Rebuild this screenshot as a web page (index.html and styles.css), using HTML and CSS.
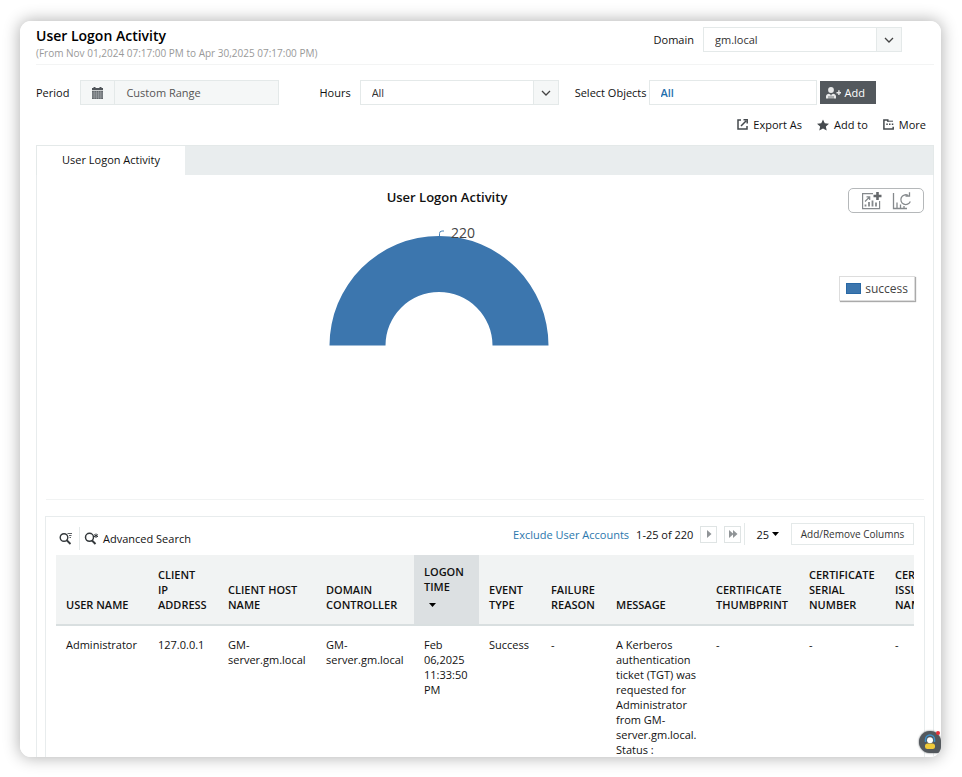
FILE: index.html
```html
<!DOCTYPE html>
<html lang="en">
<head>
<meta charset="utf-8">
<title>User Logon Activity</title>
<link rel="stylesheet" href="styles.css">
</head>
<body>
<main class="card">
  <header class="head">
    <div class="head-titles">
      <h1 class="title">User Logon Activity</h1>
      <p class="subtitle">(From Nov 01,2024 07:17:00 PM to Apr 30,2025 07:17:00 PM)</p>
    </div>
    <div class="field head-domain">
      <label for="domain">Domain</label>
      <div class="select">
        <select id="domain"><option>gm.local</option></select>
        <svg class="chev" viewBox="0 0 10 6"><path d="M1 1l4 4 4-4"/></svg>
      </div>
    </div>
  </header>

  <form class="filters">
    <div class="field period">
      <label for="period">Period</label>
      <div class="date">
        <button type="button" class="date-btn" aria-label="Open calendar">
          <svg width="11" height="12" viewBox="0 0 11 12"><path fill="#50555a" d="M0 1h1.500V0h2v1h4V0h2v1H11v2.300H0z"/><path fill="#62676b" d="M0 4h11v8H0z"/><path stroke="#a9adb0" stroke-width=".6" d="M0 6h11M0 8h11M0 10h11M2.200 4v8M4.400 4v8M6.600 4v8M8.800 4v8"/></svg>
        </button>
        <input id="period" type="text" value="Custom Range" readonly>
      </div>
    </div>
    <div class="field hours">
      <label for="hours">Hours</label>
      <div class="select">
        <select id="hours"><option>All</option></select>
        <svg class="chev" viewBox="0 0 10 6"><path d="M1 1l4 4 4-4"/></svg>
      </div>
    </div>
    <div class="field objects">
      <label for="objects">Select Objects</label>
      <input id="objects" class="objects-input" type="text" value="All" readonly>
      <button type="button" class="add">
        <svg width="15" height="12" viewBox="0 0 15 12" fill="#e8e9ea"><circle cx="5" cy="3" r="2.900"/><path d="M0 11.500V9.500C0 7.500 1.500 7 3 6.700l2 1.300 2-1.300c1.500.3 3 .8 3 2.800v2z"/><path d="M10.500 5h1.700V3.300h1.400V5H15v1.400h-1.400v1.700h-1.400V6.400h-1.700z"/><path stroke="#53585d" stroke-width=".8" d="M3 9v3M7 9v3M5 8.500V12"/></svg>
        Add
      </button>
    </div>
  </form>

  <nav class="actions">
    <a href="#export"><svg width="11" height="11" viewBox="0 0 11 11" fill="none" stroke="#44494d" stroke-width="1.500"><path d="M4 1H1v9h9V7"/><path d="M4 7L9 2M6.500.8h3.700v3.700"/></svg>Export As</a>
    <a href="#add"><svg width="12" height="12" viewBox="0 0 13 12" fill="#44494d"><path d="M6.500 0l1.900 4 4.600.6-3.400 3 .9 4.400-4-2.200-4 2.200.9-4.400L0 4.600 4.600 4z"/></svg>Add to</a>
    <a href="#more"><svg width="11" height="11" viewBox="0 0 11 11"><path fill="none" stroke="#44494d" stroke-width="1.500" d="M4.800 2.700V1H.9v9h9.300V7.800"/><path fill="none" stroke="#44494d" stroke-width="1" d="M4.800 2.200H10"/><path fill="#44494d" d="M3.300 4.500h1.500V6H3.300zM6 4.500h1.500V6H6zM8.800 4.500h1.500V6H8.800z"/></svg>More</a>
  </nav>

  <div class="tabs"><button type="button" class="tab">User Logon Activity</button></div>

  <section class="panel">
    <div class="chart">
      <figure class="plot">
        <figcaption>User Logon Activity</figcaption>
        <svg width="220" height="122" viewBox="0 0 220 122">
          <path d="M.5 121.500A109.500 109.500 0 0 1 219.500 121.500H163.500A53.500 53.500 0 0 0 56.500 121.500z" fill="#3c76ae"/>
          <path d="M110.500 12V9.500Q110.500 7 113 7h2" fill="none" stroke="#4c84b8" stroke-width="1"/>
          <text x="122" y="14" class="value">220</text>
        </svg>
      </figure>
      <div class="side">
        <div class="tools">
          <button type="button" aria-label="Add chart">
            <svg width="21" height="18" viewBox="0 0 21 18" fill="none" stroke="#85898c" stroke-width="1.200"><path d="M12 1.600H1.600v15h17V9"/><path d="M4 9.500L8.500 5M5.500 4.800h3.200V8"/><path stroke-width="1.800" d="M4.500 12.500v2M8 10v4.500M11.500 8.500v6M15 10.500v4"/><path stroke="#66696c" stroke-width="2.600" d="M16.500 0v8M12.500 4h8"/></svg>
          </button>
          <button type="button" aria-label="Refresh chart">
            <svg width="20" height="18" viewBox="0 0 20 18" fill="none" stroke="#85898c" stroke-width="1.300"><path d="M1.500 1v15.500H15M5 10.500V16M8.500 12.500V16M12 14v2"/><path d="M16 3.300A4.900 4.900 0 1 0 18.300 9.500"/><path d="M13.500 4h4V.3"/></svg>
          </button>
        </div>
        <div class="legend"><span class="swatch"></span>success</div>
      </div>
    </div>

    <div class="report">
      <div class="bar">
        <button type="button" class="search" aria-label="Search">
          <svg width="13" height="13" viewBox="0 0 13 13" fill="none" stroke="#34393c"><circle cx="5" cy="5.500" r="3.800" stroke-width="1.400"/><path stroke-width="1.800" d="M7.500 8l4 4"/><path stroke-width=".8" d="M8.500 1.500H13M10 3.500h2.500M10.500 5.500H12"/></svg>
        </button>
        <a class="advanced" href="#advanced"><svg width="15" height="13" viewBox="0 0 15 13" fill="none" stroke="#34393c"><circle cx="5.500" cy="5.300" r="4" stroke-width="1.500"/><path stroke-width="2" d="M8 8.500l3.500 3.500"/><path stroke-width="1" d="M12 1.500v4.500M10 2.600l4 2.200M14 2.600l-4 2.200"/></svg>Advanced Search</a>
        <div class="pager">
          <a class="exclude" href="#exclude">Exclude User Accounts</a>
          <span class="range">1-25 of 220</span>
          <button type="button" class="page" aria-label="Next page"><svg width="6" height="8" viewBox="0 0 6 8"><path fill="#909497" d="M1 0l4.500 4L1 8z"/></svg></button>
          <button type="button" class="page" aria-label="Last page"><svg width="10" height="8" viewBox="0 0 10 8"><path fill="#909497" d="M1 0l4.500 4L1 8zM5 0l4.500 4L5 8z"/></svg></button>
          <button type="button" class="size">25<svg width="7" height="4" viewBox="0 0 7 4"><path d="M0 0h7L3.500 4z"/></svg></button>
          <button type="button" class="columns">Add/Remove Columns</button>
        </div>
      </div>
      <div class="scroll">
        <table>
          <colgroup><col class="c-user"><col class="c-ip"><col class="c-host"><col class="c-host"><col class="c-time"><col class="c-type"><col class="c-time"><col class="c-msg"><col class="c-thumb"><col class="c-serial"><col class="c-serial"></colgroup>
          <thead>
            <tr><th>USER NAME</th><th>CLIENT IP ADDRESS</th><th>CLIENT HOST NAME</th><th>DOMAIN CONTROLLER</th><th class="sorted">LOGON TIME<svg width="7" height="4" viewBox="0 0 7 4"><path d="M0 0h7L3.500 4z"/></svg></th><th>EVENT TYPE</th><th>FAILURE REASON</th><th>MESSAGE</th><th>CERTIFICATE THUMBPRINT</th><th>CERTIFICATE SERIAL NUMBER</th><th>CERTIFICATE ISSUER NAME</th></tr>
          </thead>
          <tbody>
            <tr><td>Administrator</td><td>127.0.0.1</td><td>GM-server.gm.local</td><td>GM-server.gm.local</td><td>Feb 06,2025 11:33:50 PM</td><td>Success</td><td>-</td><td>A Kerberos authentication ticket (TGT) was requested for Administrator from GM-server.gm.local. Status :</td><td>-</td><td>-</td><td>-</td></tr>
          </tbody>
        </table>
      </div>
    </div>
  </section>

  <button type="button" class="help" aria-label="Support">
    <svg width="14" height="16" viewBox="0 0 14 16"><path d="M2.500 8V5.500a4.500 4.500 0 0 1 9 0V8" fill="none" stroke="#3d8fc9" stroke-width="1.500"/><circle cx="7" cy="6.200" r="3" fill="#fff"/><rect x="2" y="9.500" width="10" height="5.500" rx="2.500" fill="#f0c93a"/></svg>
    <span class="dot"></span>
  </button>
</main>
</body>
</html>
```
FILE: styles.css
```css
* { box-sizing: border-box; }

body {
  margin: 0;
  padding: 21px 21px 20px 20px;
  height: 100vh;
  overflow: hidden;
  background: #fff;
  color: #111;
  font: 11px/15px "Open Sans", "Noto Sans", sans-serif;
}

button, input, select { font: inherit; color: inherit; margin: 0; border-radius: 0; }
button { background: none; border: 0; padding: 0; }
a { color: inherit; text-decoration: none; }
svg { display: block; flex: none; }

.card {
  position: relative;
  display: flex;
  flex-direction: column;
  height: 100%;
  padding: 0 7px 0 16px;
  overflow: hidden;
  background: #fff;
  border-radius: 11px;
}

body::before {
  content: "";
  position: absolute;
  inset: 21px 21px 20px 20px;
  border-radius: 11px;
  box-shadow: 0 0 16px 1px rgba(0, 0, 0, .3);
}

.head {
  display: flex;
  justify-content: space-between;
  flex: none;
  height: 44px;
  padding: 6px 32px 0 0;
  border-bottom: 1px solid #f3f4f4;
}
.title { margin: 0; font-size: 14px; line-height: 17px; font-weight: 600; color: #000; }
.subtitle { margin: 2px 0 0; font-size: 10px; line-height: 15px; color: #999; }

.field { display: flex; align-items: center; height: 25px; }
.field label { white-space: nowrap; }
.head-domain { gap: 9px; }

.select { position: relative; width: 199px; height: 25px; }
.select select {
  width: 100%;
  height: 100%;
  padding: 0 36px 0 11px;
  border: 1px solid #e4e9e9;
  background: linear-gradient(#e4e9e9, #e4e9e9) right 24px top / 1px 100% no-repeat,
    linear-gradient(#f5f7f7, #f5f7f7) right top / 24px 100% no-repeat #fff;
  appearance: none;
  color: #333;
}
.chev {
  position: absolute;
  right: 8px;
  top: 10px;
  width: 10px;
  height: 6px;
  fill: none;
  stroke: #444;
  stroke-width: 1.3;
  pointer-events: none;
}

.filters { display: flex; flex: none; padding-top: 15px; }
.period { gap: 11px; }
.date { display: flex; width: 199px; height: 25px; border: 1px solid #e4e9e9; background: #f5f7f7; }
.date-btn { display: grid; place-items: center; width: 34px; border-right: 1px solid #e4e9e9; }
.date input { flex: 1; min-width: 0; padding: 0 11px; border: 0; background: none; color: #555; }
.hours { gap: 9px; margin-left: 40px; }
.objects { margin-left: 16px; }
.objects-input {
  width: 168px;
  height: 25px;
  margin: 0 3px 0 2px;
  padding: 0 11px;
  border: 1px solid #e4e9e9;
  color: #1f6fad;
  font-weight: 600;
}
.add {
  display: flex;
  align-items: center;
  gap: 4px;
  width: 56px;
  height: 23px;
  padding-left: 6px;
  background: #53585d;
  color: #fff;
}

.actions { display: flex; justify-content: flex-end; flex: none; gap: 15px; padding: 12px 8px 13px 0; }
.actions a { display: flex; align-items: center; gap: 5px; }

.tabs { display: flex; flex: none; height: 30px; background: #e9edee; border: 1px solid #e4e9e9; border-bottom: 0; }
.tab { width: 148px; padding-bottom: 2px; background: #fff; }

.panel { flex: none; padding: 0 8px; border: 1px solid #e8eced; border-width: 0 1px; }
.chart { display: grid; grid-template-columns: 1fr 85px; height: 325px; margin: 0 1px; border-bottom: 1px solid #f1f3f3; }
.plot { display: flex; flex-direction: column; align-items: center; margin: 0; padding: 14px 8px 0 0; }
.plot figcaption { padding-left: 17px; font-size: 13px; line-height: 17px; font-weight: 600; }
.plot > svg { margin-top: 18px; overflow: visible; }
.value { font-size: 14px; fill: #444; }
.side { display: flex; flex-direction: column; align-items: flex-end; padding-top: 13px; }
.tools {
  display: flex;
  align-items: center;
  justify-content: center;
  gap: 10px;
  width: 76px;
  height: 25px;
  border: 1px solid #b5b8ba;
  border-radius: 5px;
}
.legend {
  display: flex;
  align-items: center;
  gap: 4px;
  height: 25px;
  margin: 63px 9px 0 0;
  padding: 0 6px;
  border: 1px solid #ddd;
  box-shadow: 1px 1px 1px #aaa;
  font-size: 12px;
  color: #444;
}
.swatch { width: 15px; height: 11px; background: #3c76ae; border: 1px solid #2868a5; }

.report { margin-top: 16px; padding: 6px 10px 0; border: 1px solid #e8eced; }
.bar { display: flex; align-items: flex-start; height: 32px; }
.search { display: flex; align-items: center; width: 24px; height: 23px; margin-top: 4px; padding-left: 3px; border-right: 1px solid #e4e9e9; }
.advanced { display: flex; align-items: center; gap: 4px; height: 23px; margin: 4px 0 0 4px; }
.pager { display: flex; align-items: center; margin-left: auto; }
.exclude { color: #2b77ad; }
.range { margin: 0 7px; }
.page { display: grid; place-items: center; width: 17px; height: 17px; margin-right: 7px; border: 1px solid #dfe4e4; }
.size {
  display: flex;
  align-items: center;
  gap: 3px;
  height: 22px;
  margin-left: -4px;
  padding: 0 12px 0 11px;
  border-left: 1px solid #e4e9e9;
}
.columns { width: 123px; height: 22px; border: 1px solid #e4e9e9; color: #333; font-size: 10px; }

.scroll { overflow: hidden; }
table { width: 915px; table-layout: fixed; border-collapse: collapse; }
.c-user { width: 92px; }
.c-ip { width: 70px; }
.c-host { width: 98px; }
.c-time { width: 65px; }
.c-type { width: 62px; }
.c-msg { width: 100px; }
.c-thumb { width: 93px; }
.c-serial { width: 86px; }
th {
  height: 70px;
  padding: 9px 10px 12px;
  background: #f1f3f3;
  border-bottom: 2px solid #d9dfe0;
  font-weight: 600;
  text-align: left;
  vertical-align: bottom;
}
th.sorted { background: #dce0e2; }
th svg { margin: 9px 0 5px 5px; }
td { padding: 11px 6px 11px 10px; vertical-align: top; }

.help {
  position: absolute;
  right: 0;
  bottom: 4px;
  display: grid;
  place-items: center;
  width: 22px;
  height: 22px;
  border-radius: 11px 11px 4px 11px;
  background: #53585d;
  box-shadow: 0 0 2px #53585d;
}
.dot { position: absolute; right: 1px; top: 0; width: 4px; height: 4px; border-radius: 50%; background: #e8303a; }
```
